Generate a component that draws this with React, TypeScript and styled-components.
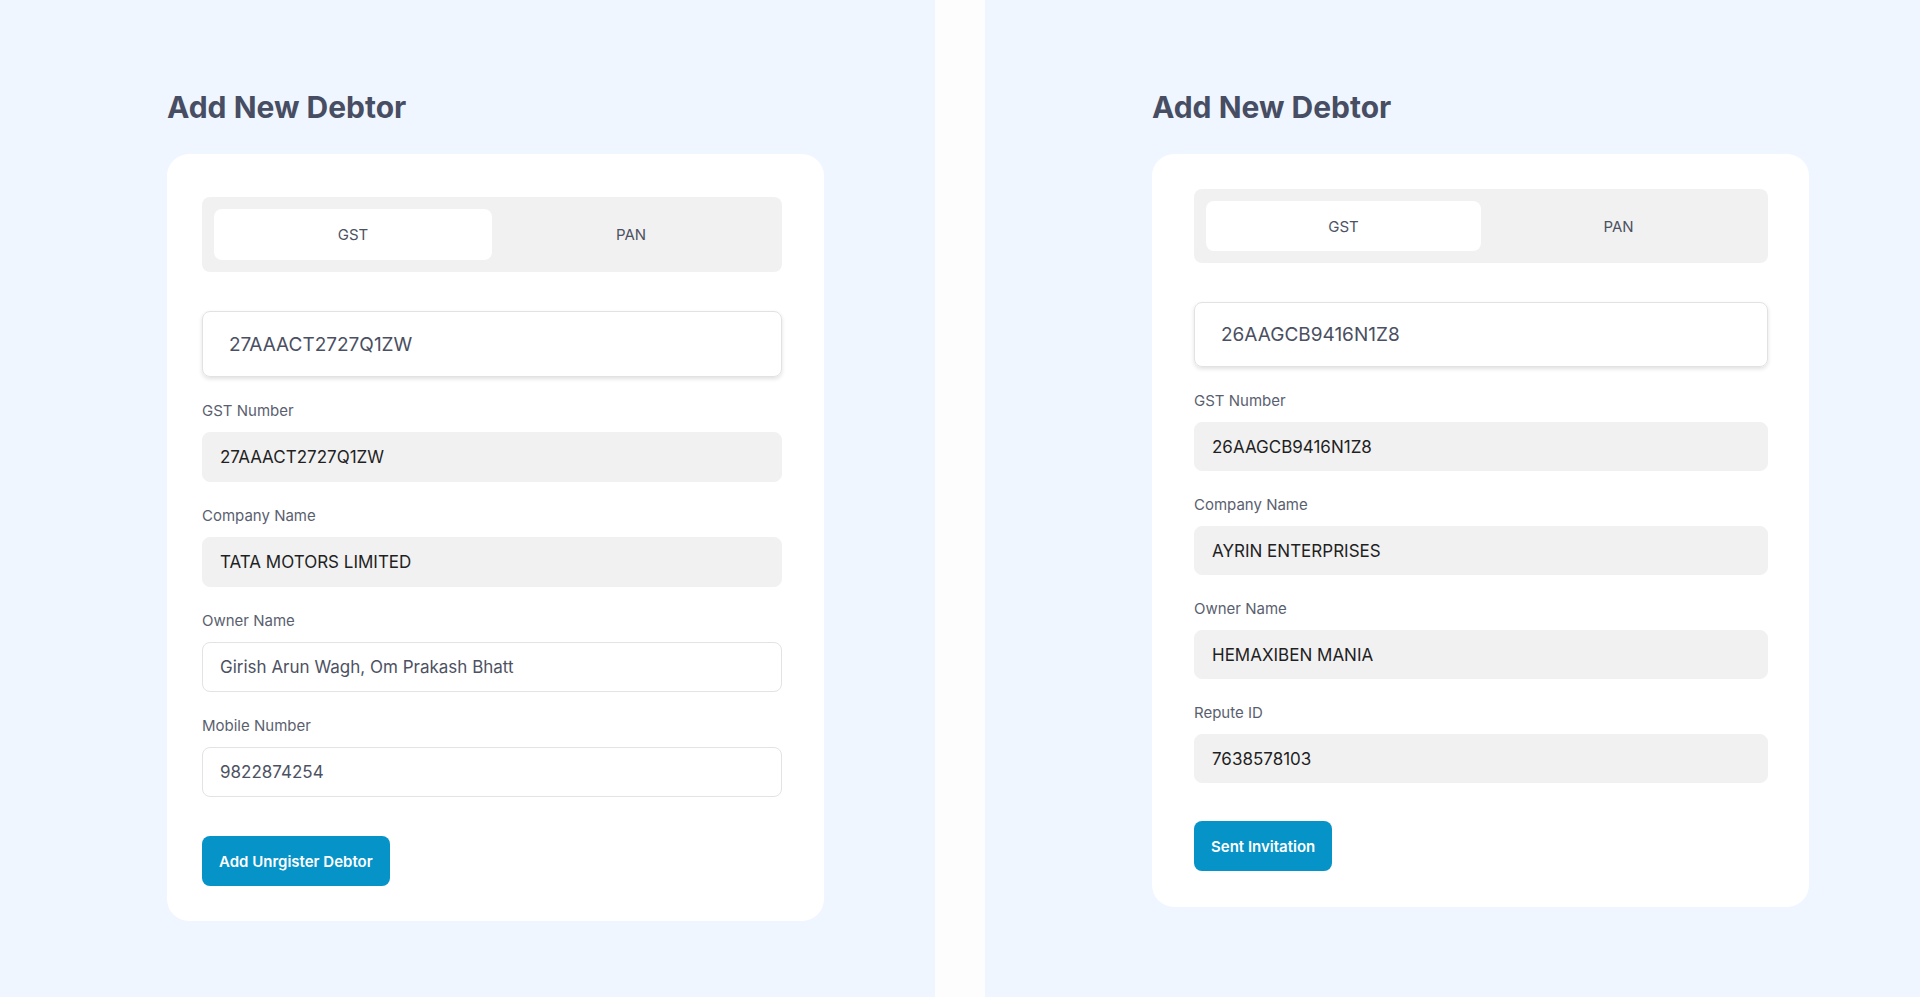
import styled, { createGlobalStyle } from "styled-components";

const GlobalStyle = createGlobalStyle`
  * {
    box-sizing: border-box;
  }
  body {
    margin: 0;
    font-family: Inter, "Noto Sans", Arial, sans-serif;
    background: #eff6ff;
  }
`;

type FieldData = {
  label: string;
  value: string;
  filled: boolean;
};

type DebtorForm = {
  gst: string;
  fields: FieldData[];
  action: string;
  pad: string;
  compact: boolean;
};

const forms: DebtorForm[] = [
  {
    gst: "27AAACT2727Q1ZW",
    fields: [
      { label: "GST Number", value: "27AAACT2727Q1ZW", filled: true },
      { label: "Company Name", value: "TATA MOTORS LIMITED", filled: true },
      { label: "Owner Name", value: "Girish Arun Wagh, Om Prakash Bhatt", filled: false },
      { label: "Mobile Number", value: "9822874254", filled: false },
    ],
    action: "Add Unrgister Debtor",
    pad: "43px 42px 35px 35px",
    compact: false,
  },
  {
    gst: "26AAGCB9416N1Z8",
    fields: [
      { label: "GST Number", value: "26AAGCB9416N1Z8", filled: true },
      { label: "Company Name", value: "AYRIN ENTERPRISES", filled: true },
      { label: "Owner Name", value: "HEMAXIBEN MANIA", filled: true },
      { label: "Repute ID", value: "7638578103", filled: true },
    ],
    action: "Sent Invitation",
    pad: "35px 41px 36px 42px",
    compact: true,
  },
];

const App = () => {
  return (
    <>
      <GlobalStyle />
      <Screen>
        <Panel>
          <DebtorCard form={forms[0]} />
        </Panel>
        <Divider />
        <Panel>
          <DebtorCard form={forms[1]} />
        </Panel>
      </Screen>
    </>
  );
};

const DebtorCard = ({ form }: { form: DebtorForm }) => {
  return (
    <>
      <Title>Add New Debtor</Title>
      <Card $pad={form.pad} $compact={form.compact}>
        <Tabs>
          <Tab $active>GST</Tab>
          <Tab>PAN</Tab>
        </Tabs>
        <SearchBox>{form.gst}</SearchBox>
        {form.fields.map((f) => (
          <FieldGroup key={f.label}>
            <Label>{f.label}</Label>
            <Field $filled={f.filled}>{f.value}</Field>
          </FieldGroup>
        ))}
        <Button>{form.action}</Button>
      </Card>
    </>
  );
};

export default App;

const Screen = styled.div`
  display: flex;
  width: 100%;
  height: 100vh;
  overflow: hidden;
`;

const Panel = styled.section`
  width: 935px;
  flex-shrink: 0;
  display: flex;
  flex-direction: column;
  align-items: flex-start;
  padding: 89px 0 0 167px;
  background: #eff6ff;
`;

const Divider = styled.div`
  width: 50px;
  flex-shrink: 0;
  background: #fdfdfd;
`;

const Title = styled.h2`
  margin: 0 0 29px;
  font-size: 30px;
  line-height: 36px;
  font-weight: 700;
  color: #474d62;
`;

// the second screen is drawn a hair tighter than the first
const Card = styled.div<{ $pad: string; $compact: boolean }>`
  --tabs-h: ${({ $compact }) => ($compact ? 74 : 75)}px;
  --search-h: ${({ $compact }) => ($compact ? 65 : 66)}px;
  --field-h: ${({ $compact }) => ($compact ? 49 : 50)}px;
  --action-gap: ${({ $compact }) => ($compact ? 38 : 39)}px;

  width: 657px;
  display: flex;
  flex-direction: column;
  align-items: stretch;
  padding: ${({ $pad }) => $pad};
  background: #ffffff;
  border-radius: 22px;
`;

const Tabs = styled.div`
  display: grid;
  grid-template-columns: 1fr 1fr;
  height: var(--tabs-h);
  padding: 12px;
  margin-bottom: 39px;
  background: #f1f1f1;
  border-radius: 8px;
`;

const Tab = styled.div<{ $active?: boolean }>`
  display: flex;
  align-items: center;
  justify-content: center;
  border-radius: 8px;
  font-size: 15px;
  color: #4d5263;
  background: ${({ $active }) => ($active ? "#ffffff" : "transparent")};
`;

const SearchBox = styled.div`
  height: var(--search-h);
  display: flex;
  align-items: center;
  padding: 0 26px;
  margin-bottom: 25px;
  border: 1px solid #e2e2e4;
  border-radius: 8px;
  box-shadow: 0 2px 4px rgba(0, 0, 0, 0.12);
  font-size: 19px;
  color: #4a4f62;
`;

const FieldGroup = styled.div`
  display: flex;
  flex-direction: column;
  margin-bottom: 25px;

  &:last-of-type {
    margin-bottom: var(--action-gap);
  }
`;

const Label = styled.div`
  font-size: 15px;
  line-height: 18px;
  margin-bottom: 12px;
  color: #5a5f6f;
`;

const Field = styled.div<{ $filled: boolean }>`
  height: var(--field-h);
  display: flex;
  align-items: center;
  padding: 0 17px;
  border-radius: 8px;
  font-size: 17px;
  background: ${({ $filled }) => ($filled ? "#f1f1f1" : "#ffffff")};
  border: 1px solid ${({ $filled }) => ($filled ? "#f1f1f1" : "#e3e3e5")};
  color: ${({ $filled }) => ($filled ? "#1f1f24" : "#4d5263")};
`;

const Button = styled.button`
  align-self: flex-start;
  height: 50px;
  padding: 0 17px;
  border: none;
  border-radius: 8px;
  background: #0593c8;
  color: #ffffff;
  font-family: Inter, "Noto Sans", Arial, sans-serif;
  font-size: 15px;
  font-weight: 600;
  cursor: pointer;
`;
